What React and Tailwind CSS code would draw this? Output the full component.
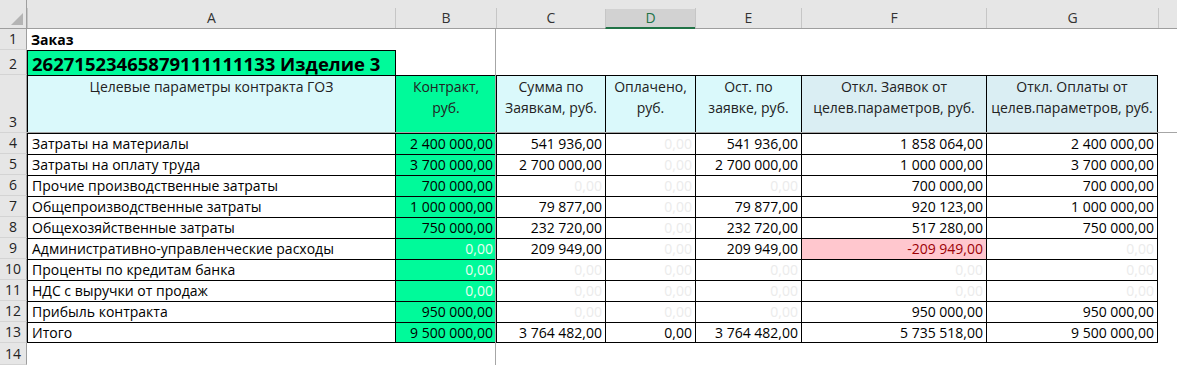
const COLS = ['A', 'B', 'C', 'D', 'E', 'F', 'G', '']

// null = zero shown in faint grey; 'W' = zero in white on green
const ROWS = [
  ['Затраты на материалы', '2 400 000,00', '541 936,00', null, '541 936,00', '1 858 064,00', '2 400 000,00'],
  ['Затраты на оплату труда', '3 700 000,00', '2 700 000,00', null, '2 700 000,00', '1 000 000,00', '3 700 000,00'],
  ['Прочие производственные затраты', '700 000,00', null, null, null, '700 000,00', '700 000,00'],
  ['Общепроизводственные затраты', '1 000 000,00', '79 877,00', null, '79 877,00', '920 123,00', '1 000 000,00'],
  ['Общехозяйственные затраты', '750 000,00', '232 720,00', null, '232 720,00', '517 280,00', '750 000,00'],
  ['Административно-управленческие расходы', 'W', '209 949,00', null, '209 949,00', 'R-209 949,00', null],
  ['Проценты по кредитам банка', 'W', null, null, null, null, null],
  ['НДС с выручки от продаж', 'W', null, null, null, null, null],
  ['Прибыль контракта', '950 000,00', null, null, null, '950 000,00', '950 000,00'],
  ['Итого', '9 500 000,00', '3 764 482,00', '0,00', '3 764 482,00', '5 735 518,00', '9 500 000,00'],
]

const HEADS = [
  { text: ['Контракт,', 'руб.'], bg: 'bg-[#00fa9a]' },
  { text: ['Сумма по', 'Заявкам, руб.'], bg: 'bg-[#daf9fb]' },
  { text: ['Оплачено,', 'руб.'], bg: 'bg-[#daf9fb]' },
  { text: ['Ост. по', 'заявке, руб.'], bg: 'bg-[#daf9fb]' },
  { text: ['Откл. Заявок от', 'целев.параметров, руб.'], bg: 'bg-[#daeef3]' },
  { text: ['Откл. Оплаты от', 'целев.параметров, руб.'], bg: 'bg-[#daeef3]' },
]

function RowNum({ n, align = 'items-center' }) {
  return (
    <div className={`flex ${align} justify-center bg-[#e6e6e6] border-r border-b border-r-[#9e9e9e] border-b-[#d4d4d4] text-[14px] text-[#222] leading-[20px]`}>
      {n}
    </div>
  )
}

function ValueCell({ v, col, last, total }) {
  let bg = col === 1 ? 'bg-[#00fa9a]' : 'bg-white'
  let color = 'text-black'
  let text = v
  if (v === null) { text = '0,00'; color = 'text-[#ebebeb]' }
  else if (v === 'W') { text = '0,00'; color = 'text-[#eafff4]' }
  else if (v.startsWith('R')) { text = v.slice(1); bg = 'bg-[#ffc7ce]'; color = 'text-[#9c0006]' }
  return (
    <div className={`flex items-center justify-end pr-[3px] border-l border-t border-black ${last ? 'border-r' : ''} ${total ? 'border-b' : ''} ${bg} ${color}`}>
      {text}
    </div>
  )
}

export default function App() {
  return (
    <div className="relative w-[1177px] h-[365px] overflow-hidden bg-white" style={{ fontFamily: '"Open Sans", "Noto Sans", sans-serif' }}>
      <div className="grid w-[1222px] grid-cols-[27px_368px_101px_109px_90px_106px_185px_172px_64px] grid-rows-[29px_21px_25px_58px_repeat(10,21px)_22px] text-[14px] text-black leading-[20px]">
        {/* column headers */}
        <div className="relative bg-[#e6e6e6] border-r border-b border-[#9e9e9e]">
          <svg className="absolute right-[3px] bottom-[3px]" width="12" height="12" viewBox="0 0 12 12">
            <polygon points="12,0 12,12 0,12" fill="#b4b4b4" />
          </svg>
        </div>
        {COLS.map((c, i) => (
          <div key={i} className="flex flex-col justify-end bg-[#e6e6e6] border-b border-[#9e9e9e]">
            {c === 'D' ? (
              <div className="h-[20px] flex items-center justify-center bg-[#d2d2d2] border-l border-[#c6c6c6] border-b-2 border-b-[#217346] text-[#217346] -mb-px">D</div>
            ) : (
              <div className="h-[20px] flex items-center justify-center border-l border-[#c6c6c6] text-[#333]">{c}</div>
            )}
          </div>
        ))}

        {/* row 1 */}
        <RowNum n="1" />
        <div className="flex items-end pl-[4px] font-bold">Заказ</div>
        <div className="col-span-7" />

        {/* row 2 */}
        <RowNum n="2" align="items-end" />
        <div className="flex items-end pl-[4px] bg-[#00fa9a] border-l border-t border-black font-bold text-[18.5px] leading-[23px]">
          26271523465879111111133 Изделие 3
        </div>
        <div className="border-l border-black col-span-7" />

        {/* row 3 */}
        <RowNum n="3" align="items-end" />
        <div className="flex justify-center bg-[#daf9fb] border-l border-t border-black text-[#222] leading-[21px]">
          Целевые параметры контракта ГОЗ
        </div>
        {HEADS.map((h, i) => (
          <div key={i} className={`flex flex-col items-center text-[#222] leading-[21px] border-l border-t border-black ${i === 5 ? 'border-r' : ''} ${h.bg}`}>
            <span>{h.text[0]}</span>
            <span>{h.text[1]}</span>
          </div>
        ))}
        <div />

        {/* data rows */}
        {ROWS.map((r, ri) => {
          const total = ri === ROWS.length - 1
          return [
            <RowNum key={`n${ri}`} n={ri + 4} />,
            <div key={`a${ri}`} className={`flex items-center pl-[4px] border-l border-t border-black ${total ? 'border-b' : ''}`}>{r[0]}</div>,
            ...r.slice(1).map((v, ci) => (
              <ValueCell key={`${ri}-${ci}`} v={v} col={ci + 1} last={ci === 5} total={total} />
            )),
            <div key={`h${ri}`} />,
          ]
        })}

        {/* row 14 */}
        <RowNum n="14" />
        <div className="col-span-8" />
      </div>

      {/* freeze pane lines */}
      <div className="absolute left-[495px] top-[29px] w-px h-[336px] bg-[#a6a6a6]" />
      <div className="absolute left-[27px] top-[132px] h-px w-[1150px] bg-[#a6a6a6]" />
    </div>
  )
}
